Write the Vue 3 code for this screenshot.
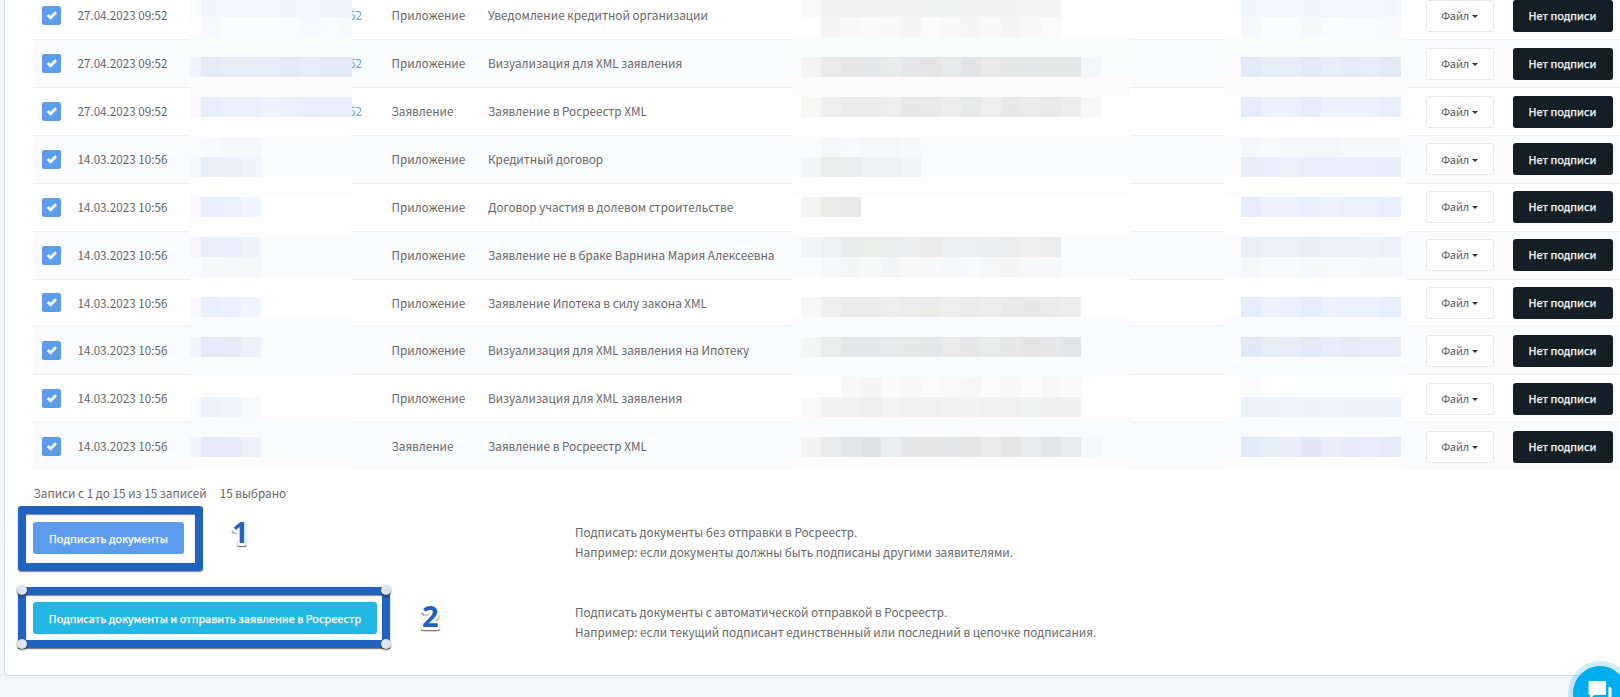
<script setup>
const documents = [
  { date: '27.04.2023 09:52', number: '52', type: 'Приложение', name: 'Уведомление кредитной организации' },
  { date: '27.04.2023 09:52', number: '52', type: 'Приложение', name: 'Визуализация для XML заявления' },
  { date: '27.04.2023 09:52', number: '52', type: 'Заявление', name: 'Заявление в Росреестр XML' },
  { date: '14.03.2023 10:56', number: '', type: 'Приложение', name: 'Кредитный договор' },
  { date: '14.03.2023 10:56', number: '', type: 'Приложение', name: 'Договор участия в долевом строительстве' },
  { date: '14.03.2023 10:56', number: '', type: 'Приложение', name: 'Заявление не в браке Варнина Мария Алексеевна' },
  { date: '14.03.2023 10:56', number: '', type: 'Приложение', name: 'Заявление Ипотека в силу закона XML' },
  { date: '14.03.2023 10:56', number: '', type: 'Приложение', name: 'Визуализация для XML заявления на Ипотеку' },
  { date: '14.03.2023 10:56', number: '', type: 'Приложение', name: 'Визуализация для XML заявления' },
  { date: '14.03.2023 10:56', number: '', type: 'Заявление', name: 'Заявление в Росреестр XML' }
];

// Background of every 20px band of the hidden columns, top to bottom
const bands = [
  'ffffff', 'ffffff', 'fafcfb', 'fafbfd', 'fcfcfc', 'ffffff', 'fefefe', 'fafbfd',
  'fafbfd', 'fdfdfd', 'ffffff', 'fdfdfd', 'fafbfd', 'fafbfd', 'fefefe', 'ffffff',
  'fafbfe', 'fafbfd', 'fafbfd', 'ffffff', 'ffffff', 'fafbfd', 'fafbfd', 'fcfcfc'
];

// Cell colours by band index; the first cell of each column is narrower
const numberCells = {
  0: 'fbfcff f2f5ff f3f6ff f3f6ff f3f6ff f0f5fe f3f6fd f2f5ff f1f4ff',
  1: 'fdfdff f8f9ff fbfcff fbfcff fbfcff f9fbff f8f9fe fafbff f8f9ff',
  3: 'f1f4fd e4ebf7 e6edf7 e6edf7 e6edf8 e3e9f6 e8ecf8 e4e9f6 e5e9f6',
  5: 'f7f9ff e7effb ebf0fd ebf0fd eef3fd ebf0fd ebeffd e9eefb eaeefb',
  7: 'fafbfd f7f9fc f6f7fb f6f7fb',
  8: 'f4f7fc e7effa eaf0fa eff3fe',
  10: 'f7f9ff eaeffc ebf0fc f1f5ff',
  12: 'f4f6fb e9eff9 e9eefa eef2fb',
  13: 'fafbfd f4f7fb f5f6fa f4f7fb',
  15: 'f7f9ff eaeffc ecf1fd f1f5ff',
  17: 'f3f5fc e4eaf7 e5ebf7 edf1f9',
  19: 'ffffff fdfdff fdfdfe fefeff',
  20: 'f9fbff edf2fc eff4fe f6f9ff',
  22: 'f3f5fc e4ebf7 e5ebf8 ecf0f8'
};

const personCells = {
  0: 'ffffff f9f9f9 f2f2f2 f2f2f2 f2f2f2 f3f3f3 f2f2f2 f1f4f3 f1f4f3 f3f3f3 f1f4f3 f3f3f3 f4f4f4 f4f4f4',
  1: 'ffffff fefefe f5f5f5 f8f8f8 fafafa f8f8f8 f5f5f5 fafcfb f8f8f8 f5f5f5 f8f8f8 f4f4f4 f7f7f7 fbfbfb',
  3: 'fafbfd f4f4f4 e9ebed e8e7e8 e5e7ea e8ebea e4e6e9 e5e5e5 e7e9eb e3e4e7 e9e9e9 e5e8e6 e5e7e9 e5e8e7 e4e6e8 f5f6f9',
  5: 'ffffff f7f7f4 eeeeee eaeaea ebebeb eeeeee e8e8e8 e9e9e9 ededed e6eae8 eeeeee e8e8e8 eaeaea e9e9e9 ebeeed f7f7f7',
  7: 'fafbfd f9fbfd f5f7f9 f7f9fc f4f6f8 f4f6f8 f6f8fa',
  8: 'fafbfd f3f5f7 eaeeeb eaecee eef0f2 eef0f2 f2f4f6',
  10: 'ffffff f4f4f2 eaeae7 e9e9e9',
  12: 'fafbfd f3f4f6 eff0f2 e9ebed eaeeeb eaecee ebedef eceae9 edeef0 edeef0 ebedef eaecee efefef ebecee',
  13: 'fafbfd fafbfd f6f7f9 f3f5f7 f6f9f7 f3f4f7 f7f7f8 f6f8fa f4f6f8 f8f9fc f5f6f8 f5f5f6 f6f7f9 f6f7f9',
  15: 'ffffff f7f7f7 efefef ebebeb ebebeb eeeeee ececec ebebe8 eeeeee ebebeb ededed e9e9e9 e8e8e8 ebebeb ededed ffffff',
  17: 'fafbfd f3f6f5 eaedeb e4e6e8 e5e7e9 e7e9eb e6e9e8 e4e7e9 eaeaea e5e7e9 e8ebea e5e8e6 e5e5e5 e6e7e9 e3e5e7',
  19: 'ffffff ffffff fefefe f7f7f7 f5f5f5 fafafa f7f7f7 fbfbfb f9f9f9 f6f6f6 fbfbfb f8f8f8 fcfcfc f7f7f7 fafafa ffffff',
  20: 'ffffff f9f9f7 eff2f1 f1f1ef eeeeee f4f4f4 f1f1f1 f0f0f0 f2f2f2 f3f3f3 f1f1f1 f0f0ee f0f3f2 efefef efefef',
  22: 'fafbfd f3f3f3 e8eaec e4e6e8 e0e2e4 ebecee e5e7e9 e7e7e7 e5e7e9 e5e5e5 e8ebea e5e5e5 e8eaec e3e5e8 eaebed f6f7fa'
};

const linkCells = {
  0: 'ffffff f1f5ff f2f6ff f2f6ff f1f5ff f3f6ff f3f6ff f4f6ff f3f5ff',
  1: 'ffffff f5f9fe fbfcff fbfcff f5f9fe fafcff fafbff fafbff f8faff',
  3: 'fafbfd e2e9f7 e6eef7 e8edf9 e2eaf7 e8edf8 e6ecf7 e8ecf8 e3eaf7',
  5: 'ffffff e5ecfb ecf1fd ecf1fd e7eefb edf3fc ebf1fd ebf1fd e8effc',
  7: 'fafbfd f6f7fb f8f9fa f5f6fa f5f6fa f5f6fa f7f8fa f7f8fa f7f8fa',
  8: 'fafbfd e6eef8 e9effa ebf0fa e8effa e9effa e9effa e9effa e6eef9',
  10: 'ffffff e5edfa ecf1fd ecf1fd e9effb edf2fc ebf0fd ebf0fd e8effc',
  12: 'fafbfd e7eff9 ebf0fa ebf0fa e7eef9 ebf0fa ebf0fa edf2fb ebf0fa',
  13: 'fafbfd f3f6fa f8f9fb f8f9fb f4f7fb f8f9fc f7f9fc f5f7fb f5f7fb',
  15: 'ffffff e5edfb edf2fd ecf1fd e7eefb edf2fc ebf1fd ebf1fd e8effc',
  17: 'fafbfd e1e9f7 e5edf7 e8edf9 e2eaf7 e8edf9 e6ecf7 e8ecf8 e6ecf8',
  19: 'ffffff fbfcff fefeff fdfeff fdfeff fcfdff fdfeff fdfeff fdfeff',
  20: 'ffffff ecf1fd edf3fc f1f4fe eef3fd f1f4fe eff3fd eff3fd edf2fc',
  22: 'fafbfd e2e9f7 e5edf7 e8edf9 e1e9f7 e8edf8 e5ecf7 e7ecf8 e4ebf8'
};

const masks = [
  { key: 'number', cells: numberCells },
  { key: 'person', cells: personCells },
  { key: 'link', cells: linkCells }
];

const cellsOf = (mask, index) => (mask.cells[index] ? mask.cells[index].split(' ') : []);
</script>

<template>
  <div class="page">
    <div class="panel">
      <div class="table">
        <div v-for="(doc, i) in documents" :key="i" class="row" :class="{ striped: i % 2 === 1 }">
          <span class="checkbox">
            <svg viewBox="0 0 19 19" width="19" height="19">
              <path d="M5.7 9 8.6 11.8 14 6.300" fill="none" stroke="#fff" stroke-width="2.7" />
            </svg>
          </span>
          <span class="cell date">{{ doc.date }}</span>
          <a class="cell number">{{ doc.number }}</a>
          <span class="cell">{{ doc.type }}</span>
          <span class="cell">{{ doc.name }}</span>
          <button class="btn btn-file"><span>Файл</span><i class="caret"></i></button>
          <button class="btn btn-dark"><span>Нет подписи</span></button>
        </div>
      </div>

      <div class="info">
        <span>Записи с 1 до 15 из 15 записей</span>
        <span>15 выбрано</span>
      </div>

      <div class="action">
        <div class="action-button">
          <button class="btn btn-primary"><span>Подписать документы</span></button>
          <div class="frame frame-first"></div>
          <b class="mark mark-first">1</b>
        </div>
        <div class="hint">
          <p>Подписать документы без отправки в Росреестр.</p>
          <p>Например: если документы должны быть подписаны другими заявителями.</p>
        </div>
      </div>
      <div class="action">
        <div class="action-button">
          <button class="btn btn-info"><span>Подписать документы и отправить заявление в Росреестр</span></button>
          <div class="frame frame-second">
            <i class="handle tl"></i>
            <i class="handle tr"></i>
            <i class="handle bl"></i>
            <i class="handle br"></i>
          </div>
          <b class="mark mark-second">2</b>
        </div>
        <div class="hint">
          <p>Подписать документы с автоматической отправкой в Росреестр.</p>
          <p>Например: если текущий подписант единственный или последний в цепочке подписания.</p>
        </div>
      </div>
    </div>

    <div v-for="mask in masks" :key="mask.key" class="mask" :class="'mask-' + mask.key">
      <div v-for="(band, i) in bands" :key="i" class="band" :style="{ background: '#' + band }">
        <i v-for="(color, c) in cellsOf(mask, i)" :key="c" :style="{ background: '#' + color }"></i>
      </div>
    </div>

    <div class="chat">
      <svg viewBox="0 0 54 54" width="54" height="54">
        <path d="M17 15h14.500a1.500 1.500 0 0 1 1.500 1.500v11a1.500 1.500 0 0 1-1.500 1.500H21l-4 4v-4a1.500 1.500 0 0 1-1.500-1.500v-11A1.500 1.500 0 0 1 17 15z" fill="#fff" />
        <path d="M35.500 21h1.500a1.500 1.500 0 0 1 1.500 1.500V38l-4-4H23a1.500 1.500 0 0 1-1.500-1.500V31h14z" fill="#fff" />
      </svg>
    </div>
  </div>
</template>

<style>
html,
body {
  margin: 0;
  overflow: hidden;
  background: #f4f6fa;
}
</style>

<style scoped>
.page {
  position: relative;
  box-sizing: border-box;
  width: 1620px;
  height: 697px;
  padding-left: 4px;
  overflow: hidden;
  background: #f4f6fa;
  color: #656565;
  font-family: "Noto Sans CJK SC", "Noto Sans", sans-serif;
  font-size: 11.74px;
  line-height: 20px;
}

.panel {
  box-sizing: border-box;
  width: 1640px;
  height: 685px;
  margin-top: -9px;
  padding-left: 28px;
  border: 1px solid #cfdbe2;
  border-radius: 4px;
  background: #fff;
}

.table {
  margin-top: -0.64px;
  width: 1600px;
}

.row {
  box-sizing: border-box;
  display: grid;
  grid-template-columns: 44.500px 111.500px 202.500px 96.500px 937.500px 87px 100px;
  align-items: center;
  height: 47.86px;
  border-top: 1px solid #eee;
}

.row.striped {
  background: #fafbfd;
}

.checkbox {
  width: 19px;
  height: 19px;
  margin-left: 9px;
  border-radius: 2px;
  background: #5d9cec;
}

.checkbox svg {
  display: block;
}

.cell {
  padding-bottom: 0.9px;
  white-space: nowrap;
}

.date {
  font-size: 11.65px;
}

.number {
  width: 173px;
  color: #5d9cec;
  text-align: right;
}

.btn {
  box-sizing: border-box;
  height: 32px;
  padding: 0;
  border: 1px solid transparent;
  border-radius: 3px;
  color: #fff;
  font-family: inherit;
  font-size: 10.92px;
  font-weight: 400;
  line-height: 20px;
  white-space: nowrap;
  -webkit-text-stroke: 0.25px currentColor;
}

.row .btn {
  padding-bottom: 1.5px;
}

.btn-file {
  display: flex;
  align-items: center;
  justify-content: center;
  gap: 2.5px;
  width: 68px;
  border-color: #e8e8e8;
  background: #fff;
  color: #555;
  -webkit-text-stroke: 0;
}

.caret {
  margin-top: 3px;
  border: 3px solid transparent;
  border-top-color: #333;
  border-bottom: 0;
}

.btn-dark {
  width: 100px;
  background: #131e26;
}

.info {
  display: flex;
  gap: 13px;
  height: 52px;
  padding: 13px 0 0 0.5px;
  box-sizing: border-box;
}

.action {
  display: flex;
  height: 80px;
}

.action-button {
  position: relative;
  width: 542px;
}

.btn-primary {
  width: 151px;
  background: #5d9cec;
}

.btn-info {
  width: 344px;
  background: #23b7e5;
}

.frame {
  position: absolute;
  box-sizing: border-box;
  left: -15px;
  border: 8px solid #2063bf;
  box-shadow: 0 1px 1px rgba(0, 0, 0, 0.5), inset 0 1px 1px rgba(0, 0, 0, 0.5);
}

.frame-first {
  top: -16px;
  width: 185px;
  height: 65px;
  border-radius: 3px;
}

.frame-second {
  top: -15px;
  width: 372px;
  height: 61px;
}

.handle {
  position: absolute;
  width: 10px;
  height: 10px;
  border-radius: 50%;
  background: #dfe5ee;
  box-shadow: 0 1px 2px rgba(0, 0, 0, 0.6);
}

.tl { left: -9px; top: -10px; }
.tr { right: -9px; top: -10px; }
.bl { left: -9px; bottom: -9px; }
.br { right: -9px; bottom: -9px; }

.mark {
  position: absolute;
  color: #2063bf;
  font-family: "Noto Sans", sans-serif;
  font-size: 29px;
  line-height: 30px;
  text-shadow:
    2px 0 #fff, -2px 0 #fff, 0 2px #fff, 0 -2px #fff,
    2px 2px #fff, -2px 2px #fff, 2px -2px #fff, -2px -2px #fff,
    0 3px #fff, 1px 3px #fff, -1px 3px #fff,
    2px 4px 1px #777, -2px 4px 1px #777, 0 4px 1px #777;
}

.mark-first {
  left: 199px;
  top: -5px;
}

.mark-second {
  left: 389px;
  top: -1px;
}

.hint {
  white-space: nowrap;
}

.hint p {
  margin: 0;
}

.mask {
  position: absolute;
  top: -3px;
  height: 473px;
  overflow: hidden;
}

.band {
  display: flex;
  height: 20px;
}

.band i {
  flex: none;
  width: 20px;
}

.mask-number {
  left: 190px;
  width: 162px;
}

.mask-number i:first-child {
  width: 11px;
}

.mask-person {
  left: 792px;
  width: 338px;
}

.mask-person i:first-child {
  width: 9px;
}

.mask-link {
  left: 1224px;
  width: 183px;
}

.mask-link i:first-child {
  width: 17px;
}

.chat {
  position: absolute;
  left: 1573px;
  top: 666px;
  width: 54px;
  height: 54px;
  border-radius: 50%;
  background: #00aeef;
  box-shadow: 0 0 0 5px rgba(0, 174, 239, 0.2);
}
</style>
